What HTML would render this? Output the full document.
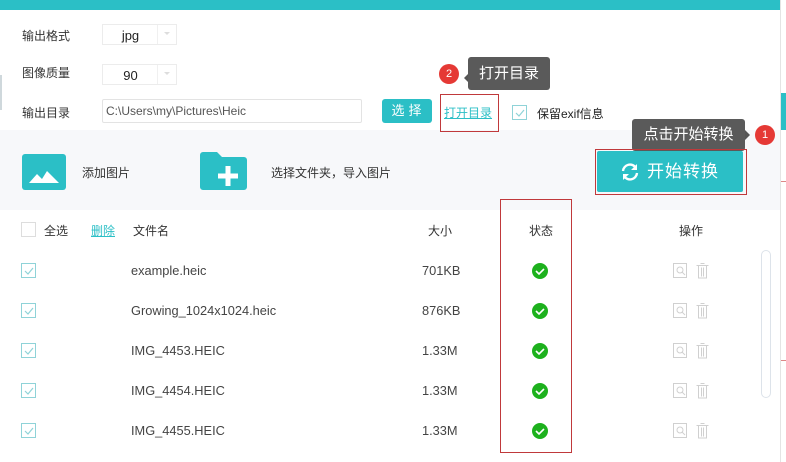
<!DOCTYPE html>
<html><head><meta charset="utf-8"><style>
*{margin:0;padding:0;box-sizing:border-box}
body{width:786px;height:462px;overflow:hidden;background:#fff;font-family:"Liberation Sans","Noto Sans CJK SC",sans-serif;font-size:12px;color:#333;position:relative}
.a{position:absolute}
.lbl{font-size:12px;color:#333}
.sel{border:1px solid #ececec;background:#fff;height:21px;width:75px}
.sel span{position:absolute;left:0;width:55px;text-align:center;top:3px;font-size:13px;color:#222}
.sel i{position:absolute;right:0;top:0;width:19px;height:19px;border-left:1px solid #f0f0f0}
.sel i:after{content:"";position:absolute;left:6px;top:7px;border:3px solid transparent;border-top-color:#ddd}
.cb{width:15px;height:15px;border:1px solid #8fd3d8}
.row{font-size:12.8px;color:#444}
.ok{width:16px;height:16px;border-radius:50%;background:#1db11d}
</style></head><body>
<div class="a" style="left:0;top:0;width:781px;height:10px;background:#2bbfc6"></div>
<div class="a" style="left:780px;top:0;width:1px;height:462px;background:#e4e4e4"></div>
<div class="a" style="left:781px;top:93px;width:5px;height:37px;background:#2bbfc6"></div>
<div class="a" style="left:781px;top:181px;width:5px;height:1px;background:#d88"></div>
<div class="a" style="left:781px;top:360px;width:5px;height:1px;background:#d88"></div>
<div class="a" style="left:0;top:130px;width:780px;height:80px;background:#f7f8fa"></div>
<div class="a" style="left:0;top:75px;width:2px;height:35px;background:#cfd8dc"></div>

<div class="a lbl" style="left:22px;top:27px">输出格式</div>
<div class="a sel" style="left:102px;top:24px"><span>jpg</span><i></i></div>
<div class="a lbl" style="left:22px;top:64px">图像质量</div>
<div class="a sel" style="left:102px;top:64px"><span>90</span><i></i></div>
<div class="a lbl" style="left:22px;top:104px">输出目录</div>
<div class="a" style="left:102px;top:99px;width:260px;height:24px;border:1px solid #e3e3e3;border-radius:2px;padding:4px 3px;font-size:12px;color:#555">C:\Users\my\Pictures\Heic</div>
<div class="a" style="left:382px;top:99px;width:50px;height:24px;background:#2bbfc6;border-radius:3px;color:#fff;text-align:center;line-height:24px;font-size:13px;letter-spacing:4px;padding-left:3px">选择</div>
<div class="a" style="left:440px;top:94px;width:59px;height:38px;border:1px solid #c0393b"></div>
<div class="a" style="left:444px;top:104px;color:#2bbfc6;text-decoration:underline;font-size:12px">打开目录</div>
<div class="a cb" style="left:512px;top:105px"></div>
<svg class="a" style="left:514px;top:107px" width="12" height="12"><path d="M2 6l3 3 5-6" stroke="#8fd3d8" fill="none" stroke-width="1.2"/></svg>
<div class="a" style="left:537px;top:105px;font-size:12px;color:#222">保留exif信息</div>

<div class="a" style="left:439px;top:64px;width:20px;height:20px;border-radius:50%;background:#e53935;color:#fff;text-align:center;line-height:20px;font-size:11px">2</div>
<div class="a" style="left:464px;top:73px;border:5px solid transparent;border-right-color:#555;border-left:0"></div>
<div class="a" style="left:468px;top:57px;width:82px;height:33px;background:#5a5a5a;border-radius:3px;color:#fff;font-size:15px;line-height:33px;text-align:center">打开目录</div>

<div class="a" style="left:632px;top:119px;width:113px;height:32px;background:#5a5a5a;border-radius:3px;color:#fff;font-size:15px;line-height:32px;text-align:center">点击开始转换</div>
<div class="a" style="left:745px;top:130px;border:5px solid transparent;border-left-color:#555;border-right:0"></div>
<div class="a" style="left:755px;top:125px;width:20px;height:20px;border-radius:50%;background:#e53935;color:#fff;text-align:center;line-height:20px;font-size:11px">1</div>

<div class="a" style="left:595px;top:149px;width:152px;height:46px;border:1px solid #c0393b"></div>
<div class="a" style="left:597px;top:151px;width:146px;height:41px;background:#2bbfc6;border-radius:2px;color:#fff;font-size:17px;line-height:41px;padding-left:50px;letter-spacing:1px">开始转换</div>
<svg class="a" style="left:620px;top:162px" width="20" height="20" viewBox="0 0 20 20"><path d="M3 9a7 7 0 0 1 13-3M17 11a7 7 0 0 1-13 3" stroke="#fff" stroke-width="2.4" fill="none"/><path d="M17 2v6h-6z M3 18v-6h6z" fill="#fff"/></svg>

<div class="a" style="left:22px;top:154px;width:44px;height:36px;background:#2bbfc6;border-radius:3px"></div>
<svg class="a" style="left:28px;top:168px" width="32" height="16"><path d="M1 15l8-9 5 5 5-8 12 12z" fill="#fff"/></svg>
<div class="a" style="left:82px;top:164px;font-size:12px;color:#333">添加图片</div>
<svg class="a" style="left:200px;top:152px" width="47" height="38"><path d="M0 3a3 3 0 0 1 3-3h14l5 5h22a3 3 0 0 1 3 3v27a3 3 0 0 1-3 3H3a3 3 0 0 1-3-3z" fill="#2bbfc6"/><path d="M28 14v20M18 24h20" stroke="#fff" stroke-width="5"/></svg>
<div class="a" style="left:271px;top:164px;font-size:12px;color:#333">选择文件夹，导入图片</div>

<div class="a" style="left:500px;top:199px;width:72px;height:254px;border:1px solid #c0393b"></div>
<div class="a" style="left:21px;top:222px;width:15px;height:15px;border:1px solid #ddd"></div>
<div class="a" style="left:44px;top:222px">全选</div>
<div class="a" style="left:91px;top:222px;color:#2bbfc6;text-decoration:underline">删除</div>
<div class="a" style="left:133px;top:222px">文件名</div>
<div class="a" style="left:428px;top:222px">大小</div>
<div class="a" style="left:529px;top:222px">状态</div>
<div class="a" style="left:679px;top:222px">操作</div>
<div class="a" style="left:761px;top:250px;width:10px;height:148px;border:1px solid #dde3ea;border-radius:5px"></div>

<div id="rows"></div>
<script>
var d=[["example.heic","701KB"],["Growing_1024x1024.heic","876KB"],["IMG_4453.HEIC","1.33M"],["IMG_4454.HEIC","1.33M"],["IMG_4455.HEIC","1.33M"]];
var h="";d.forEach(function(r,i){var y=263+i*40;
h+='<div class="a cb" style="left:21px;top:'+(y)+'px"></div><svg class="a" style="left:23px;top:'+(y+2)+'px" width="12" height="12"><path d="M2 6l3 3 5-6" stroke="#8fd3d8" fill="none" stroke-width="1.2"/></svg>';
h+='<div class="a row" style="left:131px;top:'+y+'px">'+r[0]+'</div>';
h+='<div class="a row" style="left:422px;top:'+y+'px">'+r[1]+'</div>';
h+='<div class="a ok" style="left:532px;top:'+(y)+'px"></div><svg class="a" style="left:535px;top:'+(y+3)+'px" width="10" height="10"><path d="M1 5l3 3 5-5" stroke="#fff" stroke-width="1.6" fill="none"/></svg>';
h+='<svg class="a" style="left:672px;top:'+(y-1)+'px" width="40" height="17" fill="none" stroke="#d0d0d0" stroke-width="1"><path d="M1.5 1.5h13v14h-13z"/><circle cx="8" cy="8" r="3"/><path d="M10 10l3 3"/><path d="M24.5 3.5h12M26.5 3.5v12.5h8V3.5M29.5 5.5v9M31.5 5.5v9M28.5 1.5h4"/></svg>';});
document.getElementById("rows").innerHTML=h;
</script>
</body></html>
